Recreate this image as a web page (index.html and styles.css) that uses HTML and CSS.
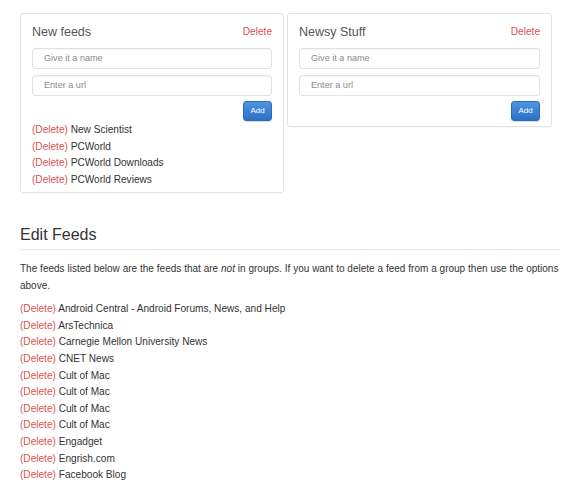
FILE: index.html
```html
<!DOCTYPE html>
<html>
<head>
<meta charset="utf-8">
<link rel="stylesheet" href="styles.css">
</head>
<body>
<div class="page">
  <div class="groups">
    <div class="panel">
      <div class="panel-head">
        <span class="panel-title">New feeds</span>
        <a class="del">Delete</a>
      </div>
      <div class="field">Give it a name</div>
      <div class="field">Enter a url</div>
      <div class="actions"><span class="btn">Add</span></div>
      <ul class="feeds group-feeds">
        <li><a class="del">(Delete)</a> New Scientist</li>
        <li><a class="del">(Delete)</a> PCWorld</li>
        <li><a class="del">(Delete)</a> PCWorld Downloads</li>
        <li><a class="del">(Delete)</a> PCWorld Reviews</li>
      </ul>
    </div>
    <div class="panel">
      <div class="panel-head">
        <span class="panel-title">Newsy Stuff</span>
        <a class="del">Delete</a>
      </div>
      <div class="field">Give it a name</div>
      <div class="field">Enter a url</div>
      <div class="actions"><span class="btn">Add</span></div>
    </div>
  </div>

  <h2 class="page-header">Edit Feeds</h2>
  <p class="intro">The feeds listed below are the feeds that are <em>not</em> in groups. If you want to delete a feed from a group then use the options above.</p>
  <ul class="feeds">
    <li><a class="del">(Delete)</a> Android Central - Android Forums, News, and Help</li>
    <li><a class="del">(Delete)</a> ArsTechnica</li>
    <li><a class="del">(Delete)</a> Carnegie Mellon University News</li>
    <li><a class="del">(Delete)</a> CNET News</li>
    <li><a class="del">(Delete)</a> Cult of Mac</li>
    <li><a class="del">(Delete)</a> Cult of Mac</li>
    <li><a class="del">(Delete)</a> Cult of Mac</li>
    <li><a class="del">(Delete)</a> Cult of Mac</li>
    <li><a class="del">(Delete)</a> Engadget</li>
    <li><a class="del">(Delete)</a> Engrish.com</li>
    <li><a class="del">(Delete)</a> Facebook Blog</li>
  </ul>
</div>
</body>
</html>
```

FILE: styles.css
```css
html, body {
  margin: 0;
  padding: 0;
  background: #fff;
}
body {
  font-family: "Liberation Sans", Arial, sans-serif;
  font-size: 10.1px;
  line-height: 16.6px;
  color: #333;
}
.page {
  padding: 13px 20px 0 20px;
}
.groups {
  display: grid;
  grid-template-columns: 264px 265px;
  column-gap: 3px;
  align-items: start;
}
.panel {
  border: 1px solid #e3e3e3;
  border-radius: 3px;
  padding: 11px 11px 5px 11px;
  box-shadow: 0 1px 1px rgba(0,0,0,0.03);
}
.panel-head {
  display: flex;
  justify-content: space-between;
  align-items: center;
  height: 14px;
  margin-bottom: 9px;
}
.panel-title {
  font-size: 12.5px;
  color: #555;
}
.del {
  color: #d9534f;
}
.field {
  height: 21px;
  box-sizing: border-box;
  border: 1px solid #e2e2e2;
  border-radius: 3px;
  padding: 0 11px;
  line-height: 19px;
  color: #8a8a8a;
  font-size: 9.1px;
  margin-bottom: 6px;
  box-shadow: inset 0 1px 1px rgba(0,0,0,0.04);
}
.field + .field {
  margin-bottom: 5px;
}
.actions {
  display: flex;
  justify-content: flex-end;
}
.btn {
  display: block;
  width: 29px;
  height: 20px;
  box-sizing: border-box;
  border: 1px solid #2b6cb4;
  border-radius: 3px;
  background: linear-gradient(#4d95e2, #2c70c6);
  color: #fff;
  font-size: 8px;
  line-height: 18px;
  text-align: center;
  box-shadow: 0 1px 1px rgba(0,0,0,0.15);
}
.feeds {
  list-style: none;
  margin: 0;
  padding: 0;
}
.group-feeds {
  margin-top: 1px;
  margin-bottom: -1px;
}
.page-header {
  font-size: 16px;
  font-weight: normal;
  line-height: 17.6px;
  color: #333;
  margin: 33px 0 0 0;
  padding-bottom: 5px;
  border-bottom: 1px solid #e5e5e5;
}
.intro {
  font-size: 10px;
  word-spacing: 0.1px;
  margin: 11px 0 7px 0;
}
```
